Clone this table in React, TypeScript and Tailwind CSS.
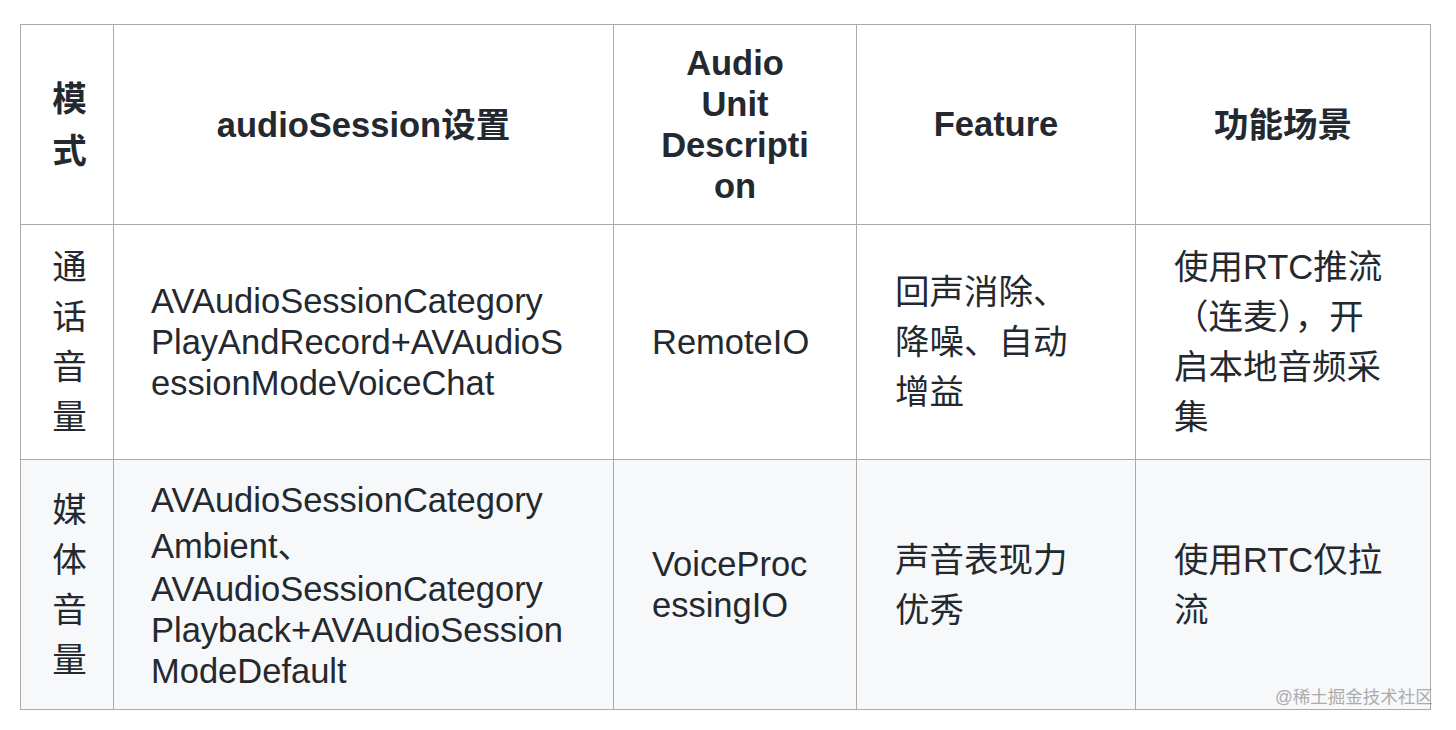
const font = { fontFamily: '"Liberation Sans", "Noto Sans CJK SC", sans-serif' };

const Lines = ({ lines, lh }: { lines: string[]; lh: string }) => (
  <div className={lh}>
    {lines.map((l, i) => (
      <div key={i} className="whitespace-nowrap">
        {l}
      </div>
    ))}
  </div>
);

const App = () => {
  return (
    <div className="relative w-[1456px] h-[730px] bg-white text-[#24292f]" style={font}>
      <div className="pt-[24px] pl-[20px]">
        <table className="table-fixed border-collapse w-[1410px] text-[34.5px]">
          <colgroup>
            <col className="w-[93px]" />
            <col className="w-[500px]" />
            <col className="w-[243px]" />
            <col className="w-[279px]" />
            <col className="w-[295px]" />
          </colgroup>
          <thead>
            <tr className="h-[200px] font-bold text-center">
              <th className="border border-[#aaaaaa] pl-[31px] pr-[26px] align-middle">
                <Lines lines={["模", "式"]} lh="leading-[52px]" />
              </th>
              <th className="border border-[#aaaaaa] px-[38px] align-middle">
                <Lines lines={["audioSession设置"]} lh="leading-[50px]" />
              </th>
              <th className="border border-[#aaaaaa] px-[38px] align-middle">
                <Lines lines={["Audio", "Unit", "Descripti", "on"]} lh="leading-[41px]" />
              </th>
              <th className="border border-[#aaaaaa] px-[38px] align-middle">
                <Lines lines={["Feature"]} lh="leading-[41px]" />
              </th>
              <th className="border border-[#aaaaaa] px-[38px] align-middle">
                <Lines lines={["功能场景"]} lh="leading-[50px]" />
              </th>
            </tr>
          </thead>
          <tbody>
            <tr className="h-[235px] bg-white">
              <td className="border border-[#aaaaaa] pl-[31px] pr-[26px] align-middle text-center">
                <Lines lines={["通", "话", "音", "量"]} lh="leading-[50px]" />
              </td>
              <td className="border border-[#aaaaaa] pl-[37px] pr-[20px] align-middle">
                <Lines
                  lines={["AVAudioSessionCategory", "PlayAndRecord+AVAudioS", "essionModeVoiceChat"]}
                  lh="leading-[41px]"
                />
              </td>
              <td className="border border-[#aaaaaa] pl-[38px] pr-[20px] align-middle">
                <Lines lines={["RemoteIO"]} lh="leading-[41px]" />
              </td>
              <td className="border border-[#aaaaaa] pl-[38px] pr-[20px] align-middle">
                <Lines lines={["回声消除、", "降噪、自动", "增益"]} lh="leading-[50px]" />
              </td>
              <td className="border border-[#aaaaaa] pl-[38px] pr-[20px] align-middle">
                <Lines lines={["使用RTC推流", "（连麦），开", "启本地音频采", "集"]} lh="leading-[50px]" />
              </td>
            </tr>
            <tr className="h-[250px] bg-[#f6f8fa]">
              <td className="border border-[#aaaaaa] pl-[31px] pr-[26px] align-middle text-center">
                <Lines lines={["媒", "体", "音", "量"]} lh="leading-[50px]" />
              </td>
              <td className="border border-[#aaaaaa] pl-[37px] pr-[20px] align-middle">
                <div className="leading-[41px]">
                  <div className="whitespace-nowrap leading-[46px]">AVAudioSessionCategory</div>
                  <div className="whitespace-nowrap leading-[46px]">Ambient、</div>
                  <div className="whitespace-nowrap">AVAudioSessionCategory</div>
                  <div className="whitespace-nowrap">Playback+AVAudioSession</div>
                  <div className="whitespace-nowrap">ModeDefault</div>
                </div>
              </td>
              <td className="border border-[#aaaaaa] pl-[38px] pr-[20px] align-middle">
                <Lines lines={["VoiceProc", "essingIO"]} lh="leading-[41px]" />
              </td>
              <td className="border border-[#aaaaaa] pl-[38px] pr-[20px] align-middle">
                <Lines lines={["声音表现力", "优秀"]} lh="leading-[50px]" />
              </td>
              <td className="border border-[#aaaaaa] pl-[38px] pr-[20px] align-middle">
                <Lines lines={["使用RTC仅拉", "流"]} lh="leading-[50px]" />
              </td>
            </tr>
          </tbody>
        </table>
      </div>
      <div className="absolute left-[1275px] top-[685px] text-[17.5px] leading-[24px] text-[#9a9a9a] opacity-80 whitespace-nowrap">
        @稀土掘金技术社区
      </div>
    </div>
  );
};

export default App;
